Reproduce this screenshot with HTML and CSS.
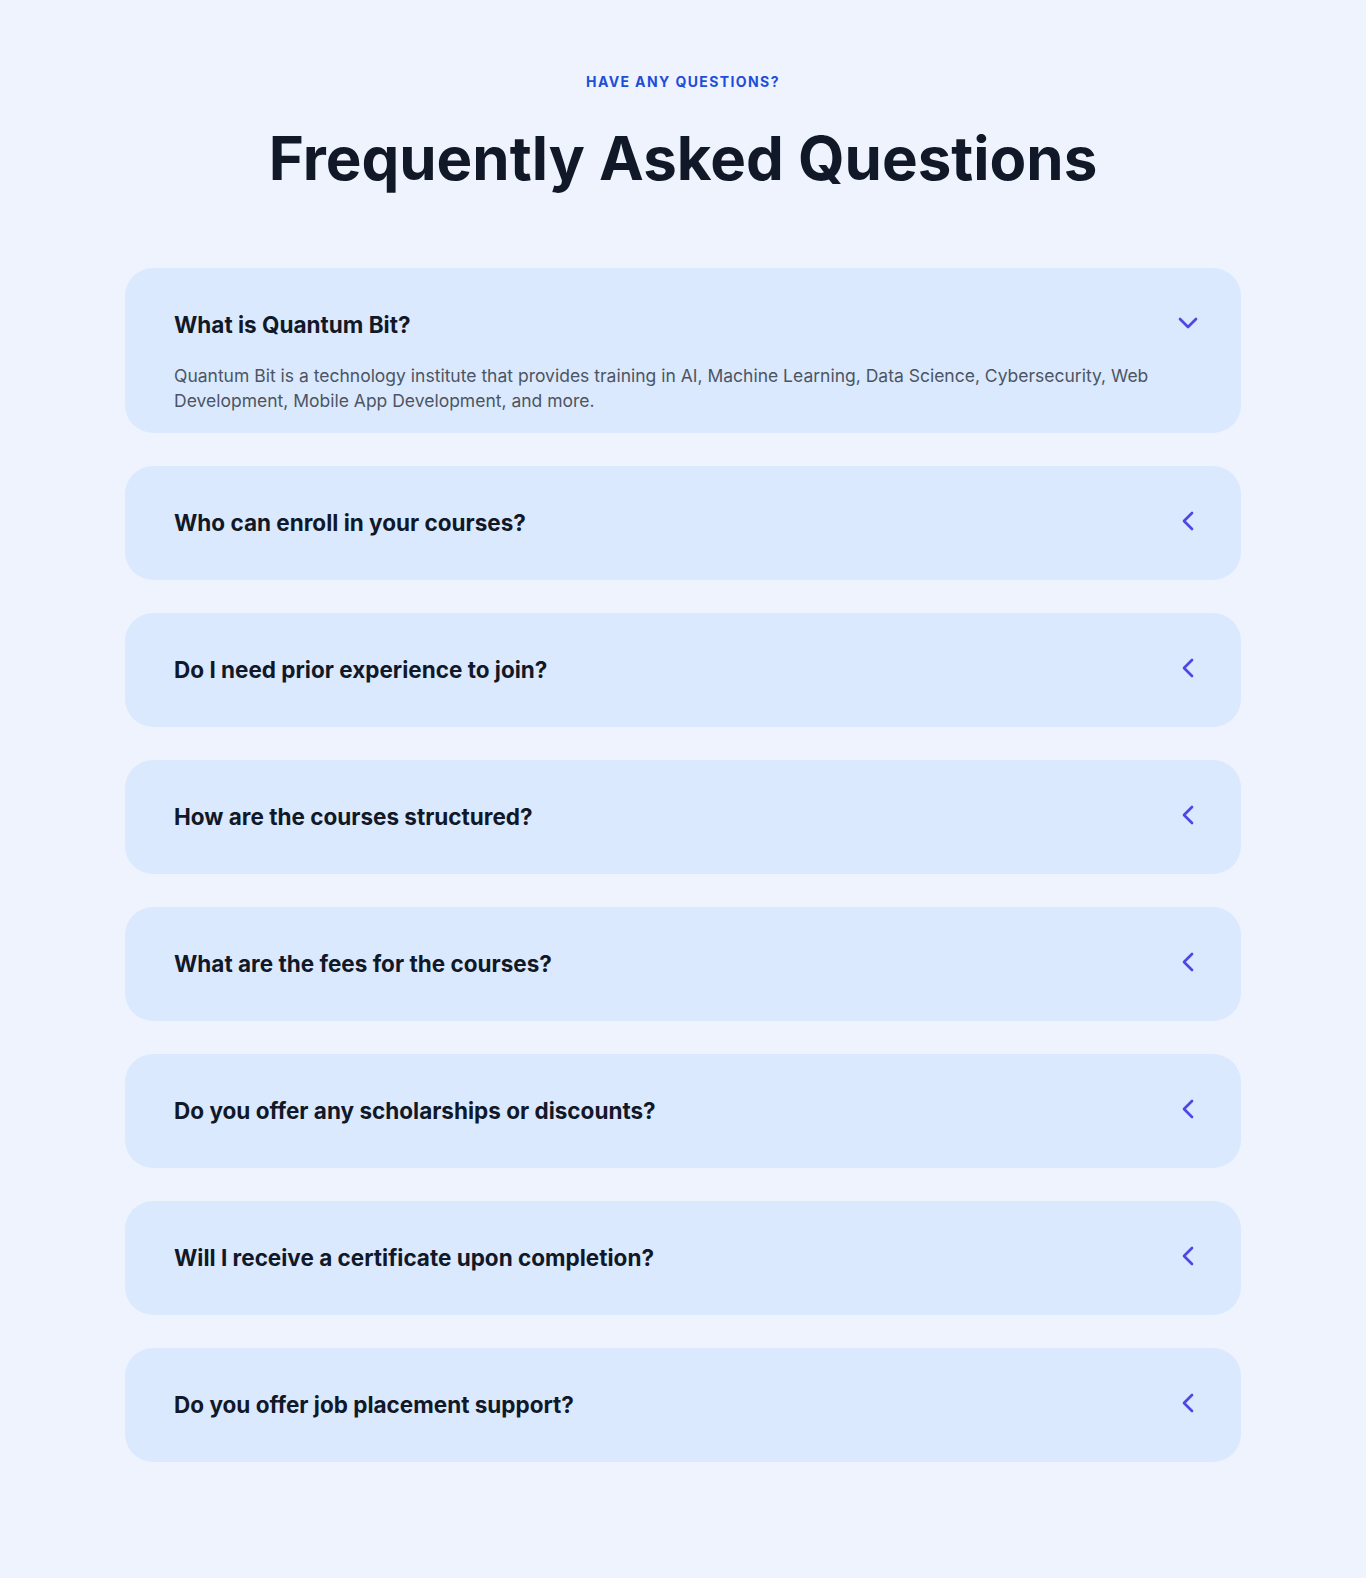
FILE: index.html
```html
<!DOCTYPE html>
<html lang="en">
<head>
<meta charset="utf-8">
<title>FAQ</title>
<link rel="stylesheet" href="styles.css">
</head>
<body>
<section class="faq">
  <p class="eyebrow">Have any questions?</p>
  <h1 class="title">Frequently Asked Questions</h1>
  <div class="list">
    <div class="item open">
      <div class="q">
        <span class="q-text">What is Quantum Bit?</span>
        <svg class="chev" viewBox="0 0 24 24" width="32" height="32"><path d="m6 9 6 6 6-6" fill="none" stroke="currentColor" stroke-width="2" stroke-linecap="round" stroke-linejoin="round"/></svg>
      </div>
      <p class="a">Quantum Bit is a technology institute that provides training in AI, Machine Learning, Data Science, Cybersecurity, Web Development, Mobile App Development, and more.</p>
    </div>
    <div class="item">
      <div class="q">
        <span class="q-text">Who can enroll in your courses?</span>
        <svg class="chev" viewBox="0 0 24 24" width="32" height="32"><path d="m6 9 6 6 6-6" fill="none" stroke="currentColor" stroke-width="2" stroke-linecap="round" stroke-linejoin="round"/></svg>
      </div>
    </div>
    <div class="item">
      <div class="q">
        <span class="q-text">Do I need prior experience to join?</span>
        <svg class="chev" viewBox="0 0 24 24" width="32" height="32"><path d="m6 9 6 6 6-6" fill="none" stroke="currentColor" stroke-width="2" stroke-linecap="round" stroke-linejoin="round"/></svg>
      </div>
    </div>
    <div class="item">
      <div class="q">
        <span class="q-text">How are the courses structured?</span>
        <svg class="chev" viewBox="0 0 24 24" width="32" height="32"><path d="m6 9 6 6 6-6" fill="none" stroke="currentColor" stroke-width="2" stroke-linecap="round" stroke-linejoin="round"/></svg>
      </div>
    </div>
    <div class="item">
      <div class="q">
        <span class="q-text">What are the fees for the courses?</span>
        <svg class="chev" viewBox="0 0 24 24" width="32" height="32"><path d="m6 9 6 6 6-6" fill="none" stroke="currentColor" stroke-width="2" stroke-linecap="round" stroke-linejoin="round"/></svg>
      </div>
    </div>
    <div class="item">
      <div class="q">
        <span class="q-text">Do you offer any scholarships or discounts?</span>
        <svg class="chev" viewBox="0 0 24 24" width="32" height="32"><path d="m6 9 6 6 6-6" fill="none" stroke="currentColor" stroke-width="2" stroke-linecap="round" stroke-linejoin="round"/></svg>
      </div>
    </div>
    <div class="item">
      <div class="q">
        <span class="q-text">Will I receive a certificate upon completion?</span>
        <svg class="chev" viewBox="0 0 24 24" width="32" height="32"><path d="m6 9 6 6 6-6" fill="none" stroke="currentColor" stroke-width="2" stroke-linecap="round" stroke-linejoin="round"/></svg>
      </div>
    </div>
    <div class="item">
      <div class="q">
        <span class="q-text">Do you offer job placement support?</span>
        <svg class="chev" viewBox="0 0 24 24" width="32" height="32"><path d="m6 9 6 6 6-6" fill="none" stroke="currentColor" stroke-width="2" stroke-linecap="round" stroke-linejoin="round"/></svg>
      </div>
    </div>
  </div>
</section>
</body>
</html>
```

FILE: styles.css
```css
* { box-sizing: border-box; }
html, body { margin: 0; padding: 0; }
body {
  background: #eef3fe;
  font-family: Inter, "Noto Sans", "Liberation Sans", sans-serif;
  color: #111827;
  min-height: 1578px;
}
.faq {
  padding: 72px 0 117px;
}
.eyebrow {
  margin: 0;
  text-align: center;
  font-size: 14px;
  line-height: 20px;
  font-weight: 700;
  letter-spacing: 0.1em;
  text-transform: uppercase;
  color: #1d4ed8;
}
.title {
  margin: 36px 0 0;
  text-align: center;
  font-size: 60px;
  line-height: 60px;
  font-weight: 700;
  color: #111827;
}
.list {
  max-width: 1116px;
  margin: 80px auto 0;
  display: flex;
  flex-direction: column;
  gap: 33px;
}
.item {
  background: #dbe9fe;
  border-radius: 28px;
}
.q {
  display: flex;
  align-items: center;
  justify-content: space-between;
  padding: 43px 37px 43px 49px;
}
.item.open .q { padding-bottom: 24px; }
.q-text {
  font-size: 22.5px;
  line-height: 28px;
  font-weight: 700;
  color: #111827;
}
.chev {
  flex: none;
  color: #4f46e5;
  margin: -6px 0 -2px;
  transform: rotate(90deg);
}
.item.open .chev { transform: none; }
.a {
  margin: 0;
  padding: 0 49px 20px;
  font-size: 17.5px;
  line-height: 25px;
  color: #4b5563;
}
```
